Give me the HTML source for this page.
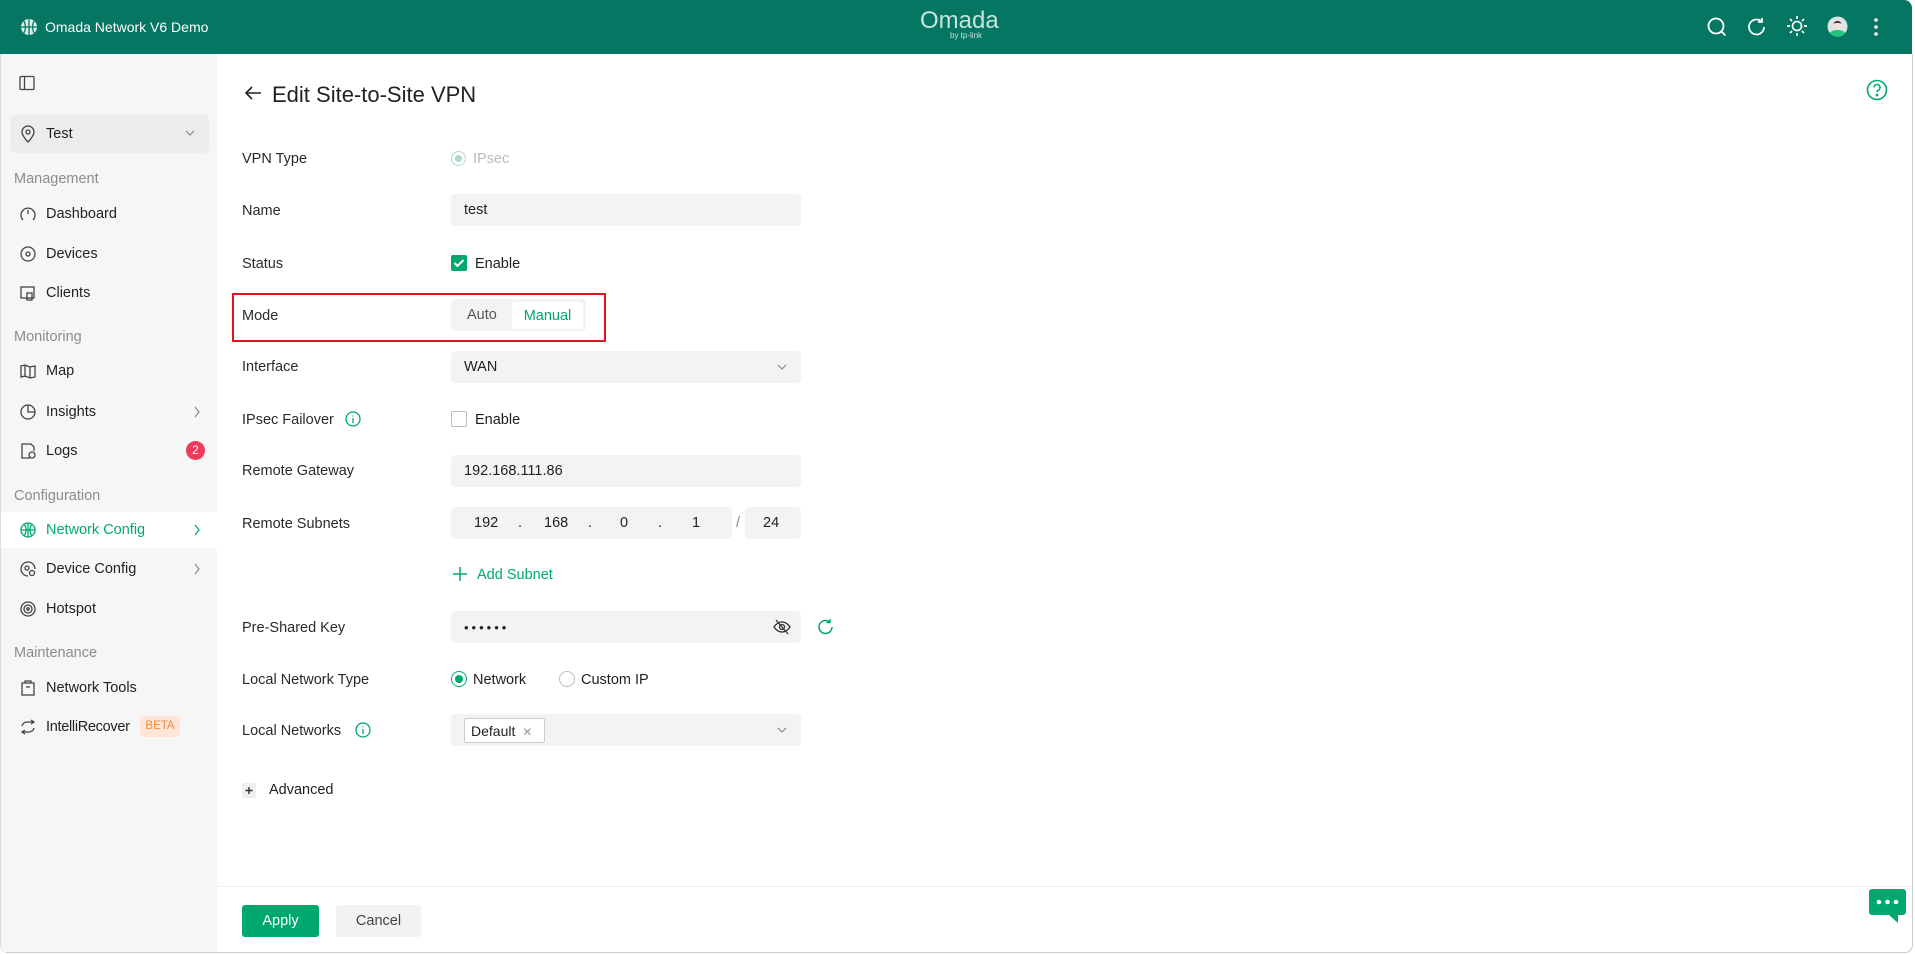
<!DOCTYPE html>
<html><head><meta charset="utf-8"><style>
*{box-sizing:border-box;margin:0;padding:0}
body{width:1915px;height:954px;overflow:hidden;font-family:"Liberation Sans",sans-serif;background:#fff;color:#1f1f1f;position:relative}
.hdr{position:absolute;left:0;top:0;width:1912px;height:54px;background:#047662;border-radius:0 8px 0 0}
.frame{position:absolute;left:0;top:54px;width:1913px;height:899px;border-right:1px solid #ccc;border-bottom:1px solid #ccc;border-left:1px solid #ddd;border-radius:0 0 8px 8px}
.side{position:absolute;left:1px;top:54px;width:216px;height:898px;background:#f6f6f6}
.abs{position:absolute}
.si{position:absolute;left:0;width:216px;height:36px;display:flex;align-items:center;font-size:14.5px;color:#222}
.si svg{position:absolute;left:19px}
.si span.t{position:absolute;left:45px;top:10px}
.sec{position:absolute;left:13px;font-size:14.5px;color:#8c8c8c}
.lbl{position:absolute;left:242px;font-size:14.5px;color:#2a2a2a;transform:translateY(-45%)}
.fld{position:absolute;left:451px;width:350px;height:32px;background:#f3f3f3;border-radius:4px;font-size:14.5px;display:flex;align-items:center;padding-left:13px;color:#222}
.g{color:#00a870}
</style></head><body>
<div class="hdr">
 <svg class="abs" style="left:20px;top:18px" width="18" height="18" viewBox="0 0 18 18"><circle cx="9" cy="9" r="8" fill="#d9efe9"/><path d="M1 9h16M9 1v16M4 3c2 4 2 8 0 12M14 3c-2 4-2 8 0 12" stroke="#047662" stroke-width="1.3" fill="none"/></svg>
 <div class="abs" style="left:45px;top:19px;color:#fff;font-size:14px">Omada Network V6 Demo</div>
 <div class="abs" style="left:920px;top:7px;color:#c5e5dc;font-size:24px">Omada</div>
 <div class="abs" style="left:950px;top:31px;color:#c5e5dc;font-size:8px">by tp-link</div>
 <svg class="abs" style="left:1706px;top:16px" width="22" height="22" viewBox="0 0 22 22" fill="none" stroke="#fff" stroke-width="1.8"><circle cx="10" cy="10" r="7.5"/><path d="M15.5 15.5l4 4"/></svg>
 <svg class="abs" style="left:1746px;top:16px" width="22" height="22" viewBox="0 0 22 22" fill="none" stroke="#fff" stroke-width="1.8"><path d="M18 11a7.5 7.5 0 1 1-2.5-5.6"/><path d="M16 2v4h-4"/></svg>
 <svg class="abs" style="left:1786px;top:15px" width="22" height="22" viewBox="0 0 22 22" fill="none" stroke="#fff" stroke-width="1.7"><circle cx="11" cy="11" r="4.5"/><path d="M11 1v3M11 18v3M1 11h3M18 11h3M4 4l2 2M16 16l2 2M4 18l2-2M16 6l2-2"/></svg>
 <svg class="abs" style="left:1827px;top:16px" width="21" height="21" viewBox="0 0 21 21"><circle cx="10.5" cy="10.5" r="10" fill="#dde3e6"/><path d="M3 17c2-4 13-4 15 0a10 10 0 0 1-15 0z" fill="#22c67a"/><circle cx="10.5" cy="9" r="3.8" fill="#f3e3d7"/><path d="M6.8 8c0-4 7.4-4 7.4 0c-1-1.5-6.4-1.5-7.4 0z" fill="#333"/></svg>
 <svg class="abs" style="left:1872px;top:16px" width="8" height="22" viewBox="0 0 8 22" fill="#fff"><circle cx="4" cy="4" r="1.8"/><circle cx="4" cy="11" r="1.8"/><circle cx="4" cy="18" r="1.8"/></svg>
</div>
<div class="frame"></div>
<div class="side">
 <svg class="abs" style="left:18px;top:21px" width="16" height="16" viewBox="0 0 16 16" fill="none" stroke="#444" stroke-width="1.3"><rect x="1" y="1.5" width="14" height="13" rx="1"/><path d="M5.5 1.5v13"/></svg>
 <div class="abs" style="left:9px;top:61px;width:199px;height:38px;background:#ececec;border-radius:5px"></div>
 <svg class="abs" style="left:19px;top:71px" width="16" height="18" viewBox="0 0 16 18" fill="none" stroke="#444" stroke-width="1.3"><path d="M8 17s6-6 6-10A6 6 0 0 0 2 7c0 4 6 10 6 10z"/><circle cx="8" cy="7" r="2"/></svg>
 <div class="abs" style="left:45px;top:72px;font-size:14.5px">Test</div>
 <svg class="abs" style="left:184px;top:75px" width="10" height="8" viewBox="0 0 10 8" fill="none" stroke="#888" stroke-width="1.2"><path d="M1 2l4 4 4-4"/></svg>
 <div class="sec" style="top:117px">Management</div>
 <div class="si" style="top:142px"><svg width="16" height="16" viewBox="0 0 16 16" fill="none" stroke="#444" stroke-width="1.3"><path d="M3 14A7 7 0 1 1 13 14"/><path d="M8 8V4"/></svg><span class="t">Dashboard</span></div>
 <div class="si" style="top:182px"><svg width="16" height="16" viewBox="0 0 16 16" fill="none" stroke="#444" stroke-width="1.3"><circle cx="8" cy="8" r="7"/><circle cx="8" cy="8" r="2"/></svg><span class="t">Devices</span></div>
 <div class="si" style="top:221px"><svg width="16" height="16" viewBox="0 0 16 16" fill="none" stroke="#444" stroke-width="1.3"><rect x="1" y="2" width="13" height="11"/><rect x="7" y="8" width="5" height="7"/></svg><span class="t">Clients</span></div>
 <div class="sec" style="top:275px">Monitoring</div>
 <div class="si" style="top:299px"><svg width="16" height="16" viewBox="0 0 16 16" fill="none" stroke="#444" stroke-width="1.3"><path d="M1 3l4-1 5 2 5-1v11l-5 1-5-2-4 1zM5 2v12M10 4v11"/></svg><span class="t">Map</span></div>
 <div class="si" style="top:340px"><svg width="16" height="16" viewBox="0 0 16 16" fill="none" stroke="#444" stroke-width="1.3"><circle cx="8" cy="8" r="7"/><path d="M8 1v7h7"/></svg><span class="t">Insights</span><svg style="left:192px" width="8" height="12" viewBox="0 0 8 12" fill="none" stroke="#888" stroke-width="1.2"><path d="M2 1l4 5-4 5"/></svg></div>
 <div class="si" style="top:379px"><svg width="16" height="16" viewBox="0 0 16 16" fill="none" stroke="#444" stroke-width="1.3"><path d="M10 15H2V1h9l3 3v4"/><circle cx="12" cy="12" r="3"/></svg><span class="t">Logs</span><div class="abs" style="left:185px;top:8px;width:19px;height:19px;border-radius:50%;background:#ee3b5b;color:#fff;font-size:12px;text-align:center;line-height:19px">2</div></div>
 <div class="sec" style="top:434px">Configuration</div>
 <div class="si" style="top:458px;background:#fff"><svg width="16" height="16" viewBox="0 0 16 16" fill="none" stroke="#00a870" stroke-width="1.3"><circle cx="8" cy="8" r="7"/><path d="M1 8h14M8 1v14M4.5 2.5c2 3.5 2 7.5 0 11M11.5 2.5c-2 3.5-2 7.5 0 11"/></svg><span class="t g">Network Config</span><svg style="left:192px" width="8" height="12" viewBox="0 0 8 12" fill="none" stroke="#00a870" stroke-width="1.3"><path d="M2 1l4 5-4 5"/></svg></div>
 <div class="si" style="top:497px"><svg width="16" height="16" viewBox="0 0 16 16" fill="none" stroke="#444" stroke-width="1.3"><path d="M8 15A7 7 0 1 1 15 8"/><circle cx="7" cy="7" r="2"/><circle cx="12" cy="12" r="2.5"/></svg><span class="t">Device Config</span><svg style="left:192px" width="8" height="12" viewBox="0 0 8 12" fill="none" stroke="#888" stroke-width="1.2"><path d="M2 1l4 5-4 5"/></svg></div>
 <div class="si" style="top:537px"><svg width="16" height="16" viewBox="0 0 16 16" fill="none" stroke="#444" stroke-width="1.3"><circle cx="8" cy="8" r="7"/><circle cx="8" cy="8" r="4"/><circle cx="8" cy="8" r="1.2"/></svg><span class="t">Hotspot</span></div>
 <div class="sec" style="top:591px">Maintenance</div>
 <div class="si" style="top:616px"><svg width="16" height="16" viewBox="0 0 16 16" fill="none" stroke="#444" stroke-width="1.3"><rect x="2" y="3" width="12" height="12"/><path d="M5 3V1h6v2M6 7h4"/></svg><span class="t">Network Tools</span></div>
 <div class="si" style="top:655px"><svg width="16" height="16" viewBox="0 0 16 16" fill="none" stroke="#444" stroke-width="1.3"><path d="M2 7a5 5 0 0 1 5-4h7M11 1l3 2-3 2M14 9a5 5 0 0 1-5 4H2M5 15l-3-2 3-2"/></svg><span class="t" style="letter-spacing:-0.3px">IntelliRecover</span><div class="abs" style="left:139px;top:7px;width:40px;height:21px;background:#fde6d8;color:#f58a3a;font-size:11.5px;text-align:center;line-height:21px;border-radius:3px">BETA</div></div>
</div>

<svg class="abs" style="left:244px;top:85px" width="18" height="16" viewBox="0 0 18 16" fill="none" stroke="#222" stroke-width="1.6"><path d="M17 8H2M8 2L2 8l6 6"/></svg>
<div class="abs" style="left:272px;top:82px;font-size:22px;color:#222">Edit Site-to-Site VPN</div>
<svg class="abs" style="left:1866px;top:79px" width="22" height="22" viewBox="0 0 22 22" fill="none" stroke="#00a870" stroke-width="1.6"><circle cx="11" cy="11" r="9.5"/><path d="M8 8.5a3 3 0 1 1 4 2.8c-.8.4-1 1-1 2"/><circle cx="11" cy="16" r=".6" fill="#00a870"/></svg>

<div class="lbl" style="top:158px">VPN Type</div>
<div class="abs" style="left:451px;top:151px;width:15px;height:15px;border-radius:50%;border:1px solid #a8dcc9"><div style="margin:3px;width:7px;height:7px;border-radius:50%;background:#a8dcc9"></div></div>
<div class="abs" style="left:473px;top:151px;font-size:14.5px;color:#bbb">IPsec</div>

<div class="lbl" style="top:210px">Name</div>
<div class="fld" style="top:194px">test</div>

<div class="lbl" style="top:263px">Status</div>
<div class="abs" style="left:451px;top:255px;width:16px;height:16px;border-radius:2px;background:#00a870"><svg width="16" height="16" viewBox="0 0 16 16" fill="none" stroke="#fff" stroke-width="2"><path d="M3.5 8l3 3 6-6"/></svg></div>
<div class="abs" style="left:475px;top:256px;font-size:14.5px">Enable</div>

<div class="abs" style="left:232px;top:293px;width:374px;height:49px;border:2px solid #e3121b"></div>
<div class="lbl" style="top:315px">Mode</div>
<div class="abs" style="left:451px;top:299px;width:135px;height:32px;background:#f3f3f3;border-radius:4px"></div>
<div class="abs" style="left:467px;top:307px;font-size:14.5px;color:#555">Auto</div>
<div class="abs" style="left:512px;top:302px;width:71px;height:27px;background:#fff;border-radius:3px;font-size:14.5px;color:#00a870;text-align:center;line-height:28px">Manual</div>

<div class="lbl" style="top:366px">Interface</div>
<div class="fld" style="top:351px">WAN</div>
<svg class="abs" style="left:777px;top:363px" width="10" height="8" viewBox="0 0 10 8" fill="none" stroke="#888" stroke-width="1.2"><path d="M1 2l4 4 4-4"/></svg>

<div class="lbl" style="top:419px">IPsec Failover</div>
<svg class="abs" style="left:345px;top:411px" width="16" height="16" viewBox="0 0 16 16" fill="none" stroke="#00a870" stroke-width="1.3"><circle cx="8" cy="8" r="7"/><path d="M8 7v5M8 4.5v1"/></svg>
<div class="abs" style="left:451px;top:411px;width:16px;height:16px;border-radius:2px;border:1px solid #bbb;background:#fff"></div>
<div class="abs" style="left:475px;top:412px;font-size:14.5px">Enable</div>

<div class="lbl" style="top:470px">Remote Gateway</div>
<div class="fld" style="top:455px">192.168.111.86</div>

<div class="lbl" style="top:523px">Remote Subnets</div>
<div class="fld" style="top:507px;width:281px;padding:0"></div>
<div class="abs" style="left:474px;top:515px;font-size:14.5px">192</div>
<div class="abs" style="left:518px;top:515px;font-size:14.5px">.</div>
<div class="abs" style="left:544px;top:515px;font-size:14.5px">168</div>
<div class="abs" style="left:588px;top:515px;font-size:14.5px">.</div>
<div class="abs" style="left:620px;top:515px;font-size:14.5px">0</div>
<div class="abs" style="left:658px;top:515px;font-size:14.5px">.</div>
<div class="abs" style="left:692px;top:515px;font-size:14.5px">1</div>
<div class="abs" style="left:736px;top:515px;font-size:14.5px;color:#888">/</div>
<div class="fld" style="top:507px;left:745px;width:56px;padding-left:18px">24</div>

<svg class="abs" style="left:452px;top:566px" width="16" height="16" viewBox="0 0 16 16" stroke="#00a870" stroke-width="1.5"><path d="M8 1v14M1 8h14"/></svg>
<div class="abs g" style="left:477px;top:567px;font-size:14.5px">Add Subnet</div>

<div class="lbl" style="top:627px">Pre-Shared Key</div>
<div class="fld" style="top:611px;letter-spacing:3px;font-size:13px">••••••</div>
<svg class="abs" style="left:773px;top:618px" width="18" height="18" viewBox="0 0 18 18" fill="none" stroke="#333" stroke-width="1.3"><path d="M1 9s3-5 8-5 8 5 8 5-3 5-8 5-8-5-8-5z"/><circle cx="9" cy="9" r="2.5"/><path d="M3 2l12 14"/></svg>
<svg class="abs" style="left:817px;top:618px" width="18" height="18" viewBox="0 0 18 18" fill="none" stroke="#00a870" stroke-width="1.5"><path d="M15 9a6.5 6.5 0 1 1-2-4.7"/><path d="M13 1v3.5H9.5"/></svg>

<div class="lbl" style="top:679px">Local Network Type</div>
<div class="abs" style="left:451px;top:671px;width:16px;height:16px;border-radius:50%;border:1.5px solid #00a870"><div style="margin:2.5px;width:8px;height:8px;border-radius:50%;background:#00a870"></div></div>
<div class="abs" style="left:473px;top:672px;font-size:14.5px">Network</div>
<div class="abs" style="left:559px;top:671px;width:16px;height:16px;border-radius:50%;border:1px solid #bbb"></div>
<div class="abs" style="left:581px;top:672px;font-size:14.5px">Custom IP</div>

<div class="lbl" style="top:730px">Local Networks</div>
<svg class="abs" style="left:355px;top:722px" width="16" height="16" viewBox="0 0 16 16" fill="none" stroke="#00a870" stroke-width="1.3"><circle cx="8" cy="8" r="7"/><path d="M8 7v5M8 4.5v1"/></svg>
<div class="fld" style="top:714px"></div>
<div class="abs" style="left:464px;top:718px;width:81px;height:25px;background:#fff;border:1px solid #ccc;border-radius:2px;font-size:14px;line-height:24px;padding-left:6px">Default <span style="color:#999;font-size:12px;margin-left:3px">✕</span></div>
<svg class="abs" style="left:777px;top:726px" width="10" height="8" viewBox="0 0 10 8" fill="none" stroke="#888" stroke-width="1.2"><path d="M1 2l4 4 4-4"/></svg>

<div class="abs" style="left:242px;top:783px;width:14px;height:15px;background:#eee;border-radius:2px"><svg width="14" height="15" viewBox="0 0 14 15" stroke="#333" stroke-width="1.4"><path d="M7 4v7M3.5 7.5h7"/></svg></div>
<div class="abs" style="left:269px;top:782px;font-size:14.5px">Advanced</div>

<div class="abs" style="left:218px;top:886px;width:1694px;height:1px;background:#eee"></div>
<div class="abs" style="left:242px;top:905px;width:77px;height:32px;background:#00a870;border-radius:3px;color:#fff;font-size:14.5px;text-align:center;line-height:33px">Apply</div>
<div class="abs" style="left:336px;top:905px;width:85px;height:32px;background:#f2f2f2;border-radius:3px;color:#444;font-size:14.5px;text-align:center;line-height:33px">Cancel</div>

<svg class="abs" style="left:1869px;top:889px" width="37" height="34" viewBox="0 0 37 34"><path d="M3 0h31a3 3 0 0 1 3 3v20a3 3 0 0 1-3 3h-5v8l-9-8H3a3 3 0 0 1-3-3V3a3 3 0 0 1 3-3z" fill="#00a870"/><circle cx="10" cy="13" r="2.3" fill="#fff"/><circle cx="18.5" cy="13" r="2.3" fill="#fff"/><circle cx="27" cy="13" r="2.3" fill="#fff"/></svg>
</body></html>
